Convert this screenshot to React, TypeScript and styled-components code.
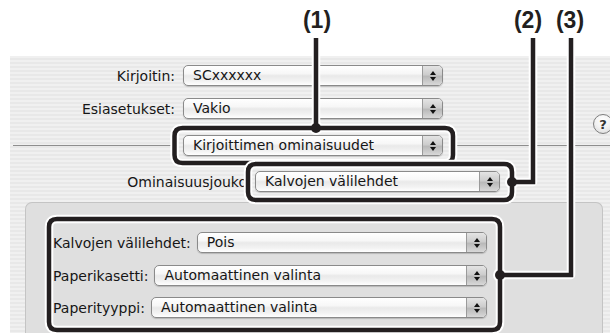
import React from 'react'
import styled, { createGlobalStyle } from 'styled-components'

const GlobalStyle = createGlobalStyle`
  html, body { margin: 0; padding: 0; background: #fff; }
  body { width: 610px; height: 333px; overflow: hidden; }
`

const Screen = styled.div`
  position: relative;
  width: 610px;
  height: 333px;
  overflow: hidden;
  background: #fff;
  font-family: "DejaVu Sans", "Liberation Sans", sans-serif;
  font-size: 14px;
  color: #161616;
`

const TopMargin = styled.div`
  height: 56px;
`

const Sheet = styled.div`
  margin-left: 10px;
  height: 277px;
  box-sizing: border-box;
  padding-top: 9px;
  display: flex;
  flex-direction: column;
  background: repeating-linear-gradient(to bottom, #f0f0f0 0 2px, #e8e8e8 2px 4px);
`

const FieldRow = styled.div<{ $gap?: number }>`
  display: flex;
  align-items: center;
  margin-top: ${p => p.$gap || 0}px;
`

const Label = styled.span<{ $w?: number }>`
  flex: none;
  width: ${p => (p.$w ? `${p.$w}px` : 'auto')};
  text-align: ${p => (p.$w ? 'right' : 'left')};
  margin-right: ${p => (p.$w ? 8 : 6)}px;
  white-space: nowrap;
  overflow: hidden;
`

const Popup = styled.div<{ $w?: number; $ml?: number }>`
  box-sizing: border-box;
  height: 21px;
  width: ${p => (p.$w ? `${p.$w}px` : 'auto')};
  flex: ${p => (p.$w ? 'none' : '1')};
  margin-left: ${p => p.$ml || 0}px;
  display: flex;
  border: 1px solid #8a8a8a;
  border-radius: 5px;
  overflow: hidden;
  background: linear-gradient(to bottom, #ffffff 0%, #f7f7f7 40%, #e9e9e9 52%, #f3f3f3 80%, #ffffff 100%);
  box-shadow: 0 1px 1px rgba(0, 0, 0, 0.18);
`

const PopupText = styled.span`
  flex: 1;
  padding-left: 9px;
  line-height: 19px;
  white-space: nowrap;
  overflow: hidden;
`

const Stepper = styled.span`
  flex: none;
  width: 19px;
  border-left: 1px solid #9a9a9a;
  display: flex;
  flex-direction: column;
  align-items: center;
  justify-content: center;
  gap: 2px;
  background: linear-gradient(to bottom, #e4e4e4 0%, #cdcdcd 45%, #b9b9b9 55%, #d8d8d8 100%);
`

const Tri = styled.span<{ $down?: boolean }>`
  width: 0;
  height: 0;
  border-left: 3px solid transparent;
  border-right: 3px solid transparent;
  ${p => (p.$down ? 'border-top: 4px solid #111;' : 'border-bottom: 4px solid #111;')}
`

const HelpButton = styled.span`
  flex: none;
  margin-left: auto;
  margin-right: -3px;
  margin-bottom: -15px;
  align-self: flex-end;
  width: 20px;
  height: 20px;
  box-sizing: border-box;
  border-radius: 50%;
  border: 1px solid #7e7e7e;
  background: radial-gradient(circle at 50% 30%, #ffffff 0%, #f2f2f2 50%, #d6d6d6 100%);
  display: flex;
  align-items: center;
  justify-content: center;
  font-size: 13px;
  font-weight: bold;
  color: #333;
`

const Rule = styled.div<{ $w?: number; $ml: number }>`
  height: 1px;
  background: #8e8e8e;
  flex: ${p => (p.$w ? 'none' : '1')};
  width: ${p => (p.$w ? `${p.$w}px` : 'auto')};
  margin-left: ${p => p.$ml}px;
`

const GroupBox = styled.div`
  margin: 10px 7px 0 15px;
  flex: 1;
  border: 1px solid #c4c4c4;
  border-bottom: none;
  border-radius: 7px 7px 0 0;
  background: #dfdfdf;
  padding: 29px 115px 0 27px;
  display: flex;
  flex-direction: column;
`

const Callouts = styled.svg`
  position: absolute;
  left: 0;
  top: 0;
  pointer-events: none;
`

const Tag = styled.span<{ $x: number }>`
  position: absolute;
  top: 5px;
  left: ${p => p.$x}px;
  transform: translateX(-50%);
  font-family: "Liberation Sans Narrow", "Liberation Sans", Arial, sans-serif;
  font-weight: bold;
  font-size: 23px;
  line-height: 30px;
  color: #231f20;
`

const Select: React.FC<{ value: string; w?: number; ml?: number }> = ({ value, w, ml }) => (
  <Popup $w={w} $ml={ml}>
    <PopupText>{value}</PopupText>
    <Stepper>
      <Tri />
      <Tri $down />
    </Stepper>
  </Popup>
)

const Callout: React.FC<{ d: string; dot: [number, number] }> = ({ d, dot }) => (
  <g>
    <path d={d} fill="none" stroke="#fff" strokeWidth={8.5} strokeLinejoin="round" />
    <circle cx={dot[0]} cy={dot[1]} r={7} fill="#fff" />
    <path d={d} fill="none" stroke="#231f20" strokeWidth={4.5} strokeLinejoin="miter" />
    <circle cx={dot[0]} cy={dot[1]} r={5} fill="#231f20" />
  </g>
)

const roundBox = (x: number, y: number, w: number, h: number, r = 8) =>
  `M${x + r} ${y} H${x + w - r} Q${x + w} ${y} ${x + w} ${y + r} V${y + h - r} Q${x + w} ${y + h} ${x + w - r} ${y + h} H${x + r} Q${x} ${y + h} ${x} ${y + h - r} V${y + r} Q${x} ${y} ${x + r} ${y} Z`

export default function App() {
  return (
    <Screen>
      <GlobalStyle />
      <TopMargin />
      <Sheet>
        <FieldRow>
          <Label $w={165}>Kirjoitin:</Label>
          <Select value="SCxxxxxx" w={260} />
        </FieldRow>
        <FieldRow $gap={12}>
          <Label $w={165}>Esiasetukset:</Label>
          <Select value="Vakio" w={260} />
          <HelpButton>?</HelpButton>
        </FieldRow>
        <FieldRow $gap={16}>
          <Rule $w={159} $ml={3} />
          <Select value="Kirjoittimen ominaisuudet" w={260} ml={11} />
          <Rule $ml={14} />
        </FieldRow>
        <FieldRow $gap={15}>
          <Label $w={237}>Ominaisuusjouko</Label>
          <Select value="Kalvojen välilehdet" w={245} />
        </FieldRow>
        <GroupBox>
          <FieldRow>
            <Label>Kalvojen välilehdet:</Label>
            <Select value="Pois" />
          </FieldRow>
          <FieldRow $gap={12}>
            <Label>Paperikasetti:</Label>
            <Select value="Automaattinen valinta" />
          </FieldRow>
          <FieldRow $gap={11}>
            <Label>Paperityyppi:</Label>
            <Select value="Automaattinen valinta" />
          </FieldRow>
        </GroupBox>
      </Sheet>

      <Callouts width={610} height={333} viewBox="0 0 610 333">
        <Callout d={`${roundBox(174.5, 128, 278.5, 35)} M316 38 V128`} dot={[316, 128]} />
        <Callout d={`${roundBox(248, 164, 264, 36)} M512 182 H533 V38`} dot={[512, 182]} />
        <Callout d={`${roundBox(49, 219, 451, 111)} M500 275 H571 V38`} dot={[500, 275]} />
      </Callouts>
      <Tag $x={317}>(1)</Tag>
      <Tag $x={528}>(2)</Tag>
      <Tag $x={570}>(3)</Tag>
    </Screen>
  )
}
